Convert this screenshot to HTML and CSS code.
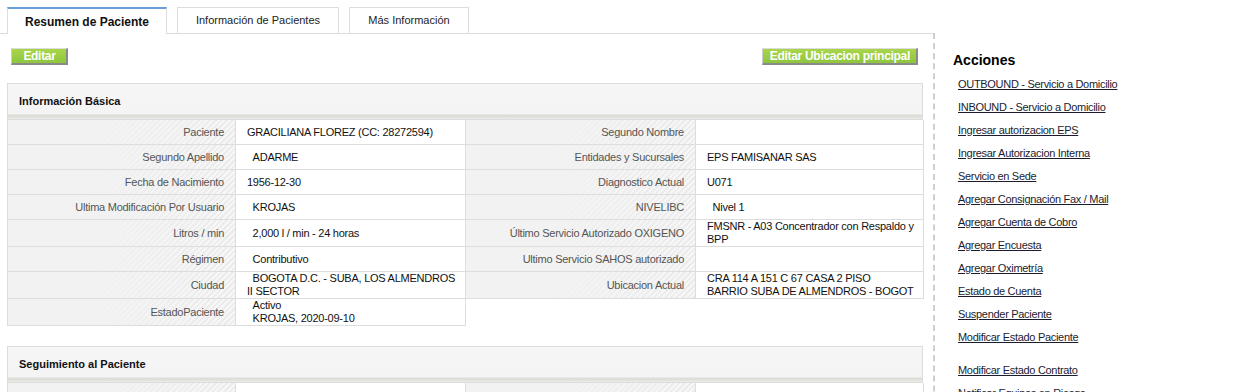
FILE: index.html
```html
<!DOCTYPE html>
<html lang="es">

<head>
    <meta charset="UTF-8">
    <meta name="viewport" content="width=device-width, initial-scale=1.0">
    <title>Resumen de Paciente</title>
    <link rel="stylesheet" href="styles.css">
</head>

<body>
    <div class="page">
        <!-- Contenido principal -->
        <main class="main">
            <nav class="tabs">
                <a href="#" class="tab active tab-resumen">Resumen de Paciente</a>
                <a href="#" class="tab tab-info">Información de Pacientes</a>
                <a href="#" class="tab tab-mas">Más Información</a>
            </nav>

            <div class="content">
                <div class="toolbar">
                    <button class="green-btn btn-edit">Editar</button>
                    <button class="green-btn">Editar Ubicacion principal</button>
                </div>

                <section class="panel">
                    <h3 class="panel-title">Información Básica</h3>
                    <div class="info-grid">
                        <div class="lbl">Paciente</div>
                        <div class="val">GRACILIANA FLOREZ (CC: 28272594)</div>
                        <div class="lbl">Segundo Nombre</div>
                        <div class="val"></div>

                        <div class="lbl">Segundo Apellido</div>
                        <div class="val">&nbsp;&nbsp;ADARME</div>
                        <div class="lbl">Entidades y Sucursales</div>
                        <div class="val">EPS FAMISANAR SAS</div>

                        <div class="lbl">Fecha de Nacimiento</div>
                        <div class="val">1956-12-30</div>
                        <div class="lbl">Diagnostico Actual</div>
                        <div class="val">U071</div>

                        <div class="lbl">Ultima Modificación Por Usuario</div>
                        <div class="val">&nbsp;&nbsp;KROJAS</div>
                        <div class="lbl">NIVELIBC</div>
                        <div class="val">&nbsp;&nbsp;Nivel 1</div>

                        <div class="lbl">Litros / min</div>
                        <div class="val">&nbsp;&nbsp;2,000 l / min - 24 horas</div>
                        <div class="lbl">Último Servicio Autorizado OXIGENO</div>
                        <div class="val">FMSNR - A03 Concentrador con Respaldo y BPP</div>

                        <div class="lbl">Régimen</div>
                        <div class="val">&nbsp;&nbsp;Contributivo</div>
                        <div class="lbl">Ultimo Servicio SAHOS autorizado</div>
                        <div class="val"></div>

                        <div class="lbl">Ciudad</div>
                        <div class="val">&nbsp;&nbsp;BOGOTA D.C. - SUBA, LOS ALMENDROS II SECTOR</div>
                        <div class="lbl">Ubicacion Actual</div>
                        <div class="val">CRA 114 A 151 C 67 CASA 2 PISO<br>BARRIO SUBA DE ALMENDROS - BOGOT</div>

                        <div class="lbl">EstadoPaciente</div>
                        <div class="val">&nbsp;&nbsp;Activo<br>&nbsp;&nbsp;KROJAS, 2020-09-10</div>
                    </div>
                </section>

                <section class="panel">
                    <h3 class="panel-title">Seguimiento al Paciente</h3>
                    <div class="info-grid">
                        <div class="lbl"></div>
                        <div class="val"></div>
                        <div class="lbl"></div>
                        <div class="val"></div>
                    </div>
                </section>
            </div>
        </main>

        <!-- Acciones -->
        <aside class="sidebar">
            <h2>Acciones</h2>
            <ul class="actions">
                <li><a href="#">OUTBOUND - Servicio a Domicilio</a></li>
                <li><a href="#">INBOUND - Servicio a Domicilio</a></li>
                <li><a href="#">Ingresar autorizacion EPS</a></li>
                <li><a href="#">Ingresar Autorizacion Interna</a></li>
                <li><a href="#">Servicio en Sede</a></li>
                <li><a href="#">Agregar Consignación Fax / Mail</a></li>
                <li><a href="#">Agregar Cuenta de Cobro</a></li>
                <li><a href="#">Agregar Encuesta</a></li>
                <li><a href="#">Agregar Oximetría</a></li>
                <li><a href="#">Estado de Cuenta</a></li>
                <li><a href="#">Suspender Paciente</a></li>
                <li class="spaced"><a href="#">Modificar Estado Paciente</a></li>
                <li><a href="#">Modificar Estado Contrato</a></li>
                <li><a href="#">Notificar Equipos en Riesgo</a></li>
            </ul>
        </aside>
    </div>
</body>

</html>
```

FILE: styles.css
```css
/* General */
body {
    margin: 0;
    padding: 0;
    font-family: "Liberation Sans", Arial, sans-serif;
    font-size: 11px;
    letter-spacing: -0.25px;
    color: #000;
    background: #fff;
    overflow: hidden;
}

.page {
    display: flex;
    align-items: flex-start;
}

.main {
    width: 933px;
    flex-shrink: 0;
}

/* Tabs */
.tabs {
    display: flex;
    align-items: flex-start;
    gap: 10px;
    height: 26px;
    padding: 7px 0 0 7px;
    border-bottom: 1px solid #ddd;
}

.tab {
    display: block;
    height: 25px;
    line-height: 24px;
    text-align: center;
    border: 1px solid #ddd;
    border-bottom: none;
    background: #fff;
    color: #222;
    text-decoration: none;
    font-size: 11px;
    letter-spacing: 0;
}

.tab.active {
    height: 25px;
    line-height: 27px;
    border-top: 2px solid #6a9fd8;
    margin-bottom: -1px;
    font-weight: bold;
    font-size: 12px;
    color: #111;
}

.tab-resumen { width: 158px; }
.tab-info { width: 160px; }
.tab-mas { width: 118px; }

/* Content */
.content {
    padding: 14px 10px 0 7px;
}

.toolbar {
    display: flex;
    justify-content: space-between;
    padding: 0 5px 0 4px;
    margin-bottom: 18px;
}

.green-btn {
    height: 17px;
    padding: 0 6px 0 7px;
    border: none;
    border-left: 1px solid #ccc;
    border-top: 1px solid #ddd;
    border-right: 2px solid #8a8a8a;
    border-bottom: 2px solid #8a8a8a;
    background: linear-gradient(to bottom, #a9d54a, #8dc63f);
    color: #fff;
    font-family: "Liberation Sans", Arial, sans-serif;
    font-weight: bold;
    font-size: 12px;
    letter-spacing: -0.3px;
    line-height: 13px;
    cursor: pointer;
}

.btn-edit {
    width: 57px;
}

/* Paneles */
.panel {
    margin-bottom: 20px;
}

.panel-title {
    margin: 0;
    height: 35px;
    line-height: 35px;
    padding-left: 11px;
    font-size: 11px;
    font-weight: bold;
    letter-spacing: 0;
    color: #111;
    border: 1px solid #ddd;
    border-bottom: none;
    background: linear-gradient(to bottom, #f6f6f6 0, #f4f4f4 30px, #dcdcd6 31px, #e4e4e0 34px, #eeeeec 35px);
}

.info-grid {
    display: grid;
    grid-template-columns: 228px 230px 230px 228px;
    border-left: 1px solid #ddd;
    border-top: 1px solid #ddd;
}

.lbl,
.val {
    min-height: 24px;
    display: flex;
    align-items: center;
    line-height: 13px;
    border-right: 1px solid #ddd;
    border-bottom: 1px solid #ddd;
}

.lbl {
    justify-content: flex-end;
    text-align: right;
    padding-right: 11px;
    color: #555;
    background:
        linear-gradient(to right, #f2f2f2 35%, rgba(242, 242, 242, 0) 100%),
        repeating-linear-gradient(135deg, #f7f7f7 0 2px, #ebebeb 2px 4px);
}

.val {
    padding-left: 11px;
    padding-right: 4px;
    color: #111;
    background: #fff;
}

/* Sidebar */
.sidebar {
    flex: 1;
    margin-top: 33px;
    min-height: 400px;
    border-left: 2px dashed #cfcfcf;
    padding: 19px 0 0 18px;
}

.sidebar h2 {
    margin: 0 0 4px;
    font-size: 14px;
    line-height: 17px;
    letter-spacing: 0;
    color: #000;
}

.actions {
    list-style: none;
    margin: 0;
    padding: 0 0 0 5px;
}

.actions li {
    line-height: 23px;
}

.actions li.spaced {
    margin-bottom: 10px;
}

.actions a {
    color: #1c1c30;
    text-decoration: underline;
    font-size: 11px;
    letter-spacing: -0.3px;
}
```
